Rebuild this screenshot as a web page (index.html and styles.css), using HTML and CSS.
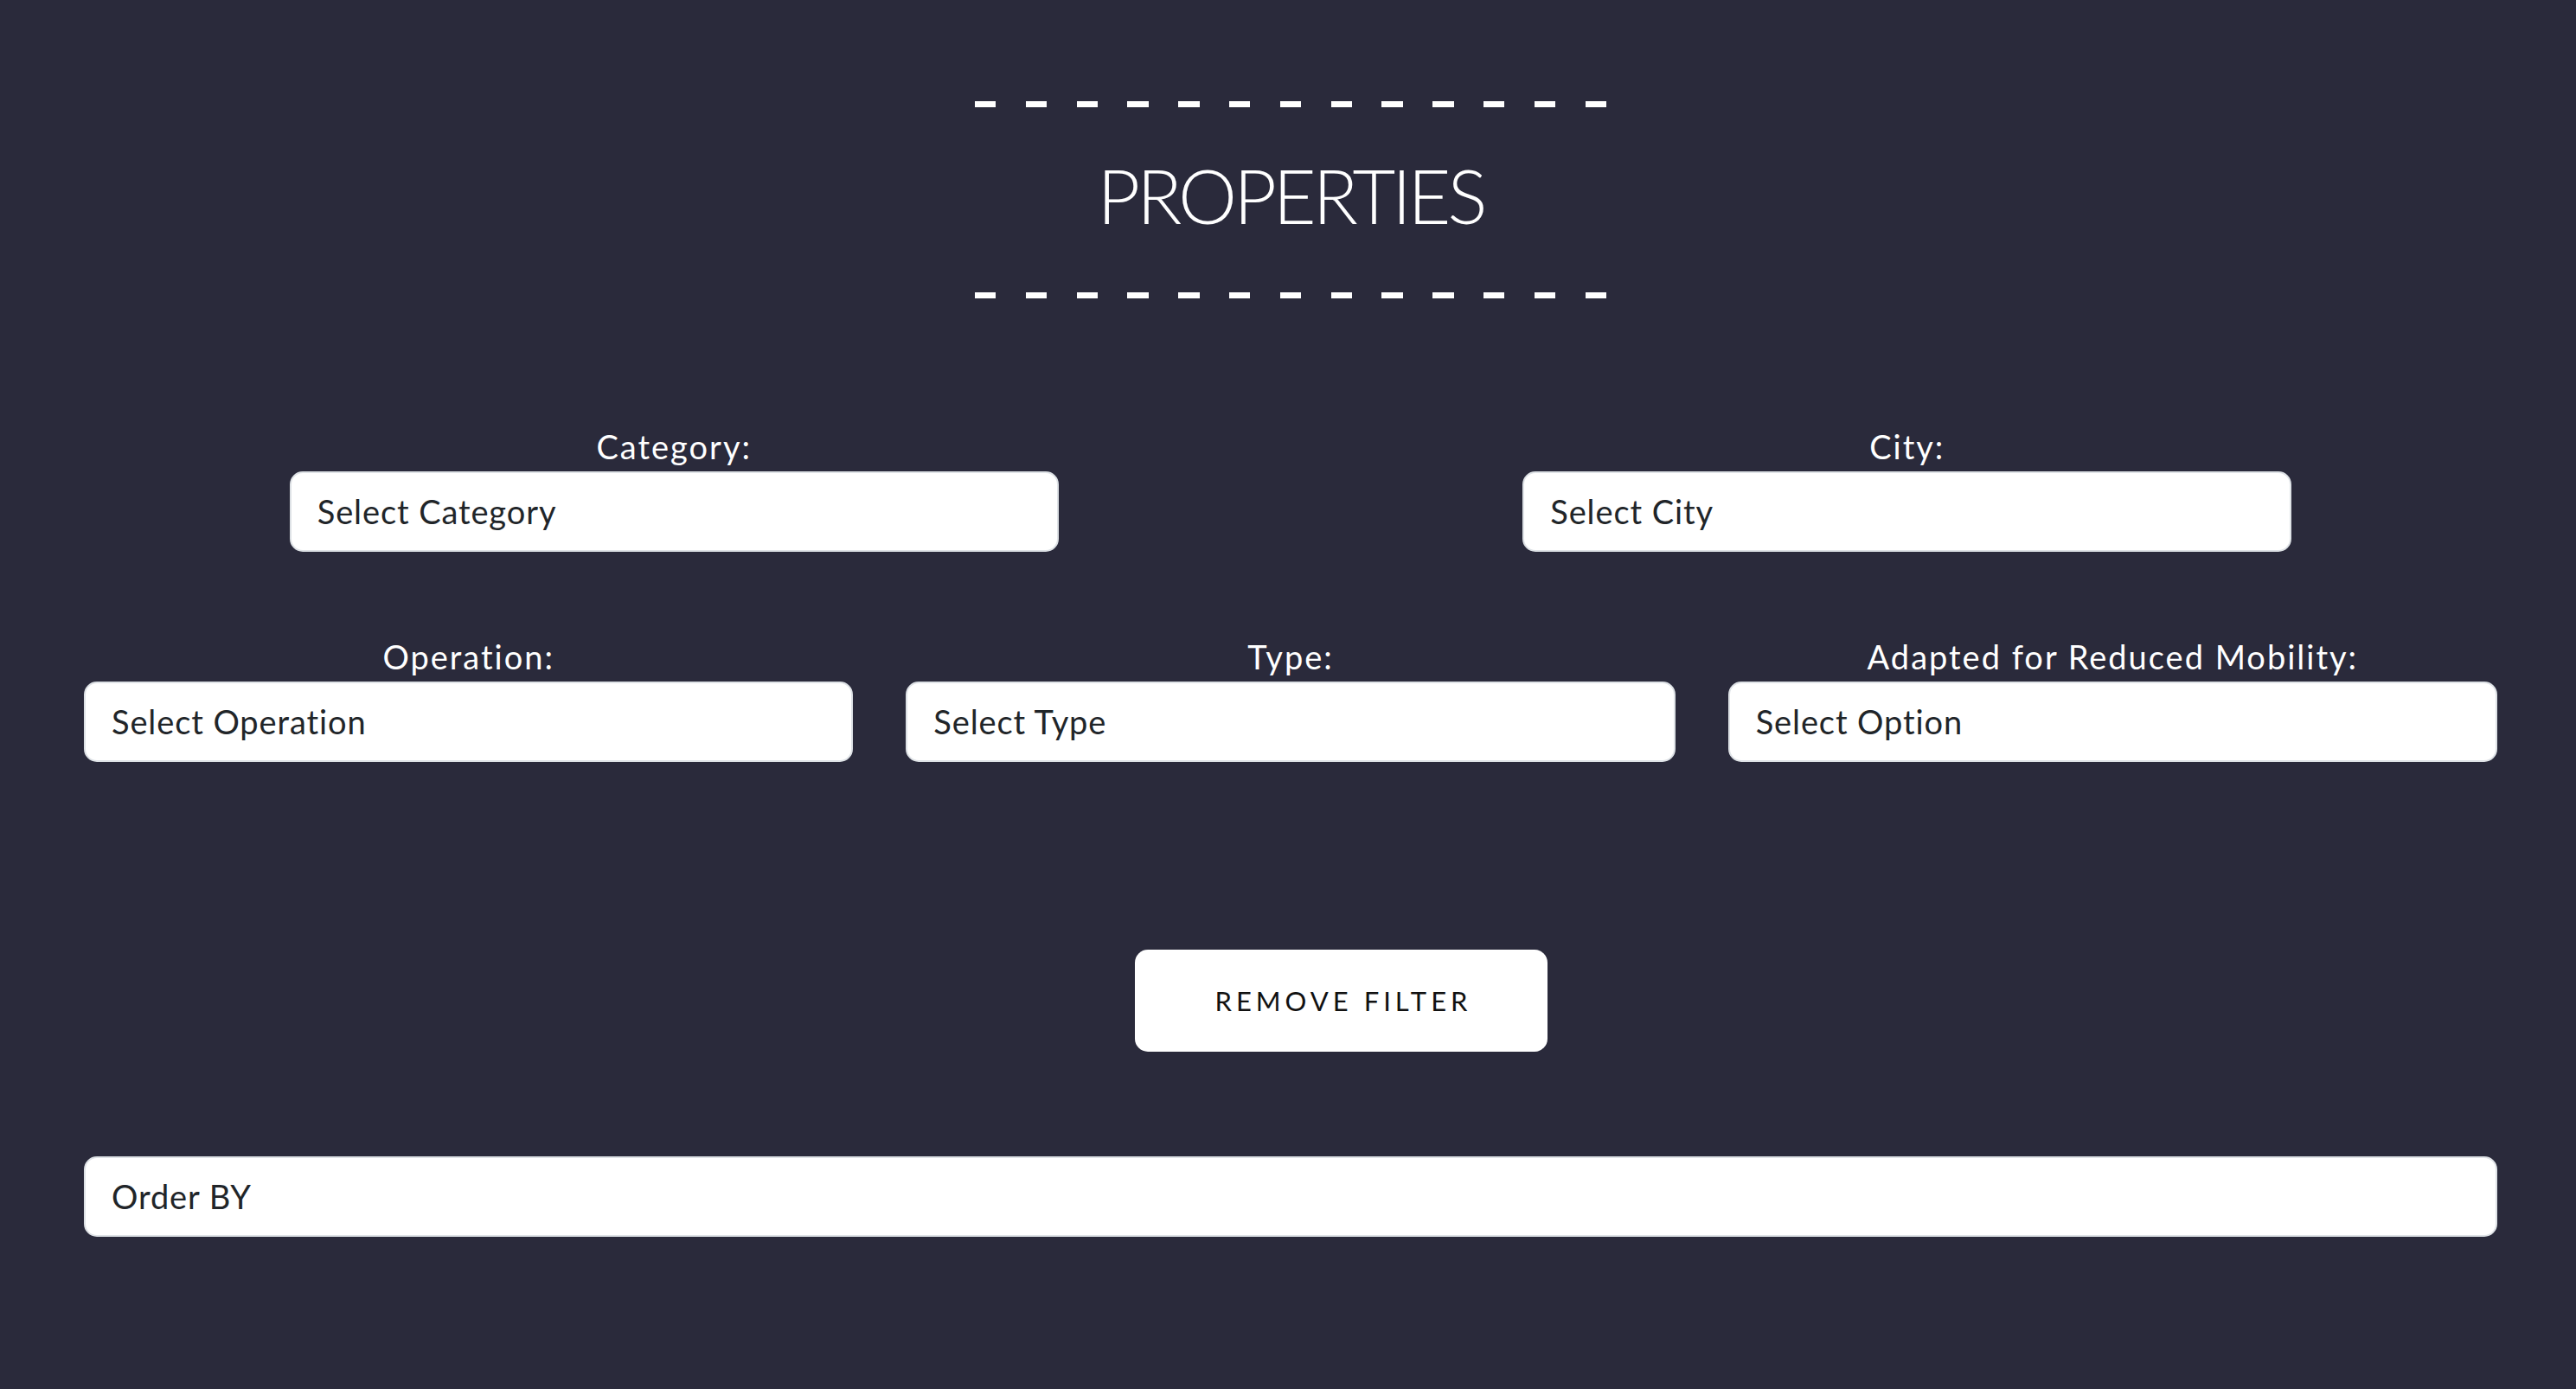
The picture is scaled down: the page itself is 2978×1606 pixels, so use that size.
FILE: index.html
```html
<!DOCTYPE html>
<html lang="en">
<head>
<meta charset="utf-8">
<title>Properties</title>
<link rel="stylesheet" href="styles.css">
</head>
<body>
<main class="page">
  <header class="title-block">
    <div class="dashes"></div>
    <h1 class="title">PROPERTIES</h1>
    <div class="dashes"></div>
  </header>

  <section class="filters">
    <div class="row row-two">
      <div class="field field-narrow">
        <label class="label" for="category">Category:</label>
        <select class="select" id="category"><option>Select Category</option></select>
      </div>
      <div class="field field-narrow">
        <label class="label" for="city">City:</label>
        <select class="select" id="city"><option>Select City</option></select>
      </div>
    </div>
    <div class="row row-three">
      <div class="field">
        <label class="label" for="operation">Operation:</label>
        <select class="select" id="operation"><option>Select Operation</option></select>
      </div>
      <div class="field">
        <label class="label" for="type">Type:</label>
        <select class="select" id="type"><option>Select Type</option></select>
      </div>
      <div class="field">
        <label class="label" for="mobility">Adapted for Reduced Mobility:</label>
        <select class="select" id="mobility"><option>Select Option</option></select>
      </div>
    </div>
  </section>

  <div class="actions">
    <button class="btn" type="button">REMOVE FILTER</button>
  </div>

  <select class="select order"><option>Order BY</option></select>
</main>
</body>
</html>
```

FILE: styles.css
```css
* { box-sizing: border-box; }

html, body {
  margin: 0;
  padding: 0;
}

body {
  background: #2a2a3b;
  color: #ffffff;
  font-family: "Lato", "Noto Sans", sans-serif;
  width: 2978px;
  height: 1606px;
  overflow: hidden;
}

.page {
  width: 2790px;
  margin-left: 97px;
  display: flex;
  flex-direction: column;
}

.title-block {
  display: flex;
  flex-direction: column;
  align-items: center;
  padding-top: 117px;
}

.dashes {
  width: 730px;
  height: 7px;
  background: repeating-linear-gradient(to right, #ffffff 0 24.5px, transparent 24.5px 58.8px);
}

.title {
  margin: 50px 0 61px;
  font-family: "Lato", sans-serif;
  font-weight: 300;
  font-size: 86px;
  line-height: 1.2;
  letter-spacing: -4px;
  color: #ffffff;
}

.filters {
  margin-top: 143px;
  display: flex;
  flex-direction: column;
  gap: 93px;
}

.row {
  display: grid;
  column-gap: 61px;
}

.row-two { grid-template-columns: 1fr 1fr; }
.row-three { grid-template-columns: 1fr 1fr 1fr; }

.field {
  display: flex;
  flex-direction: column;
  align-items: stretch;
}

.field-narrow { align-items: center; }
.field-narrow .select { width: 889px; }

.label {
  display: block;
  text-align: center;
  font-size: 38px;
  line-height: 57px;
  letter-spacing: 2px;
  color: #ffffff;
}

.select {
  appearance: none;
  -webkit-appearance: none;
  display: block;
  width: 100%;
  height: 93px;
  padding: 0 30px;
  border: 2px solid #dee2e6;
  border-radius: 15px;
  background: #ffffff;
  color: #212529;
  font-family: "Lato", "Noto Sans", sans-serif;
  font-size: 38px;
  line-height: 57px;
  letter-spacing: 0.9px;
}

.actions {
  margin-top: 217px;
  display: flex;
  padding-left: 1215px;
}

.btn {
  width: 477px;
  height: 118px;
  border: none;
  border-radius: 15px;
  background: #ffffff;
  color: #111111;
  font-family: "Lato", sans-serif;
  font-weight: 400;
  font-size: 31px;
  letter-spacing: 5px;
  padding: 0 0 0 5px;
}

.order {
  margin-top: 121px;
}
```
